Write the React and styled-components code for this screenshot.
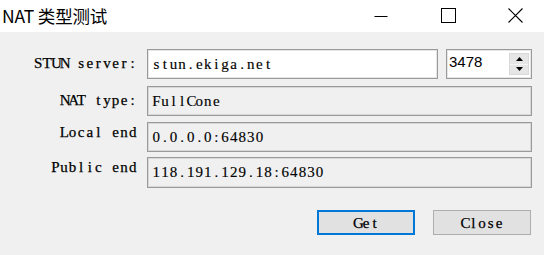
import React from "react";
import styled, { createGlobalStyle } from "styled-components";

const GlobalStyle = createGlobalStyle`
*{
  margin: 0;
  padding: 0;
  box-sizing: border-box;
}
body{
  background-color: #f0f0f0;
  width: 544px;
  height: 255px;
  overflow: hidden;
  font-family: "Liberation Serif", serif;
}
`;

const Window = styled.div`
  width: 544px;
  height: 255px;
  display: flex;
  flex-direction: column;
  background: #f0f0f0;
`;

const TitleBar = styled.div`
  height: 32px;
  background: #ffffff;
  display: flex;
  align-items: center;
  justify-content: space-between;
`;

const Title = styled.div`
  padding-left: 2px;
  margin-top: -2px;
  font-family: "Noto Sans CJK SC", "Noto Sans", sans-serif;
  font-size: 17.5px;
  color: #000;
  letter-spacing: -0.2px;
`;

const Controls = styled.div`
  display: flex;
  gap: 37px;
  margin-right: 14px;
  margin-top: -1px;
`;

const ControlButton = styled.div`
  width: 30px;
  height: 20px;
  display: flex;
  align-items: center;
  justify-content: center;
`;

const Body = styled.div`
  padding: 17px 12px 0 0;
  display: flex;
  flex-direction: column;
`;

const Row = styled.div`
  display: grid;
  grid-template-columns: 139px 1fr;
  column-gap: 8px;
  height: ${(p) => p.$h || 30}px;
  margin-top: ${(p) => p.$mt || 0}px;
`;

// SimSun-like text: serif glyphs in fixed-width cells
const Cell = styled.span`
  display: inline-block;
  width: 8.6px;
  text-align: center;
`;

const Label = styled.div`
  font-family: "Liberation Serif", serif;
  font-size: 15px;
  line-height: 16px;
  color: #000;
  text-align: right;
  padding-right: 2px;
  white-space: nowrap;
  align-self: ${(p) => (p.$top ? "start" : "center")};
  padding-top: ${(p) => (p.$top ? 2 : 0)}px;
  margin-top: ${(p) => (p.$top ? 0 : -2)}px;
  -webkit-text-stroke: 0.25px #000;
`;

const FieldLine = styled.div`
  display: flex;
  gap: 8px;
`;

const Field = styled.div`
  flex: 1;
  height: 100%;
  background: ${(p) => (p.$readOnly ? "#f0f0f0" : "#ffffff")};
  border: 1px solid #9a9a9a;
  box-shadow: inset 0 0 0 1px ${(p) => (p.$readOnly ? "#d8d8d8" : "#e6e6e6")};
  display: flex;
  align-items: center;
  padding: 0 0 0 4px;
  font-family: "Liberation Serif", serif;
  font-size: 15px;
  color: #000;
  white-space: nowrap;
  -webkit-text-stroke: 0.15px #000;
`;

const Spin = styled.div`
  width: 86px;
  height: 30px;
  background: #ffffff;
  border: 1px solid #9a9a9a;
  box-shadow: inset 0 0 0 1px #e6e6e6;
  display: flex;
  justify-content: space-between;
  padding: 3px 2px 3px 2px;
`;

const SpinValue = styled.div`
  font-family: "Liberation Sans", Arial, sans-serif;
  font-size: 15px;
  line-height: 18px;
  color: #000;
`;

const Arrows = styled.div`
  width: 20px;
  display: flex;
  flex-direction: column;
  border: 1px solid #d9d9d9;
  background: #e6e6e6;
`;

const Arrow = styled.div`
  flex: 1;
  display: flex;
  align-items: center;
  justify-content: center;
  border-top: ${(p) => (p.$down ? "1px solid #f5f5f5" : "none")};
`;

const Buttons = styled.div`
  display: flex;
  justify-content: flex-end;
  gap: 18px;
  padding-right: 1px;
  margin-top: 22px;
`;

const Button = styled.button`
  width: 98px;
  height: 25px;
  background: #e1e1e1;
  border: ${(p) => (p.$default ? "2px solid #0078d7" : "1px solid #adadad")};
  font-family: "Liberation Serif", serif;
  font-size: 15px;
  color: #000;
  -webkit-text-stroke: 0.25px #000;
  padding-top: 1px;
`;

function Mono({ text }) {
  return (
    <span>
      {text.split("").map((c, i) => (
        <Cell key={i}>{c === " " ? "\u00a0" : c}</Cell>
      ))}
    </span>
  );
}

function MinIcon() {
  return (
    <svg width="14" height="14" viewBox="0 0 14 14">
      <line x1="0.5" y1="7.5" x2="13.5" y2="7.5" stroke="#000" strokeWidth="1" />
    </svg>
  );
}

function MaxIcon() {
  return (
    <svg width="15" height="15" viewBox="0 0 15 15">
      <rect x="0.5" y="0.5" width="14" height="14" fill="none" stroke="#000" strokeWidth="1" />
    </svg>
  );
}

function CloseIcon() {
  return (
    <svg width="15" height="15" viewBox="0 0 15 15">
      <path d="M0.5 0.5 L14.5 14.5 M14.5 0.5 L0.5 14.5" stroke="#000" strokeWidth="1.1" />
    </svg>
  );
}

function Tri({ down }) {
  return (
    <svg width="7" height="4" viewBox="0 0 7 4">
      <polygon
        points={down ? "0,0 7,0 3.5,4" : "3.5,0 7,4 0,4"}
        fill="#000"
      />
    </svg>
  );
}

export default function App() {
  return (
    <Window>
      <GlobalStyle />
      <TitleBar>
        <Title>NAT 类型测试</Title>
        <Controls>
          <ControlButton>
            <MinIcon />
          </ControlButton>
          <ControlButton>
            <MaxIcon />
          </ControlButton>
          <ControlButton>
            <CloseIcon />
          </ControlButton>
        </Controls>
      </TitleBar>
      <Body>
        <Row>
          <Label>
            <Mono text="STUN server:" />
          </Label>
          <FieldLine>
            <Field>
              <Mono text="stun.ekiga.net" />
            </Field>
            <Spin>
              <SpinValue>3478</SpinValue>
              <Arrows>
                <Arrow>
                  <Tri />
                </Arrow>
                <Arrow $down>
                  <Tri down />
                </Arrow>
              </Arrows>
            </Spin>
          </FieldLine>
        </Row>
        <Row $mt={7}>
          <Label>
            <Mono text="NAT type:" />
          </Label>
          <Field $readOnly>
            <Mono text="FullCone" />
          </Field>
        </Row>
        <Row $mt={6}>
          <Label $top>
            <Mono text="Local end" />
          </Label>
          <Field $readOnly>
            <Mono text="0.0.0.0:64830" />
          </Field>
        </Row>
        <Row $mt={5} $h={31}>
          <Label $top>
            <Mono text="Public end" />
          </Label>
          <Field $readOnly>
            <Mono text="118.191.129.18:64830" />
          </Field>
        </Row>
        <Buttons>
          <Button $default>
            <Mono text="Get" />
          </Button>
          <Button>
            <Mono text="Close" />
          </Button>
        </Buttons>
      </Body>
    </Window>
  );
}
